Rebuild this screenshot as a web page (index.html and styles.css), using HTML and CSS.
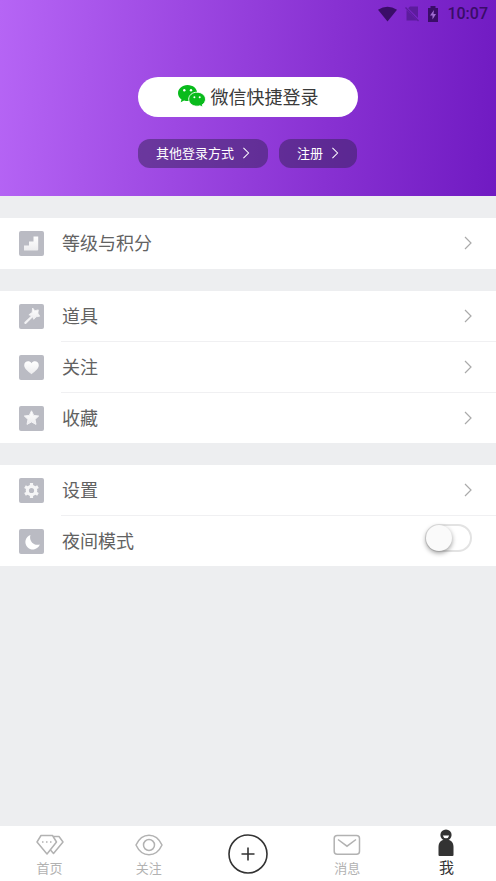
FILE: index.html
```html
<!DOCTYPE html>
<html lang="zh-CN">
<head>
<meta charset="utf-8">
<meta name="viewport" content="width=device-width, initial-scale=1">
<title>我</title>
<link rel="stylesheet" href="styles.css">
</head>
<body>
<svg class="defs" aria-hidden="true">
  <symbol id="chevron" viewBox="0 0 8 14"><path d="M1 1l6 6-6 6" fill="none" stroke="currentColor" stroke-width="1.2"/></symbol>
  <linearGradient id="shade" x1="0" y1="0" x2="0" y2="1"><stop offset="0" stop-color="#fff"/><stop offset="1" stop-color="#ececee"/></linearGradient>
</svg>
<header class="hero">
  <div class="status">
    <svg width="19" height="16" viewBox="0 0 20 16"><path d="M0 3.500Q10-3 20 3.500L10 16z" fill="#3a0d68"/></svg>
    <svg width="14" height="16" viewBox="0 0 14 16"><path d="M5 .5h8v11.500L3.200 2.300zM1.500 4L12 14.500H1.500z" fill="#5c1c9d"/><path d="M.5 1.500l13 13.500" stroke="#5c1c9d" stroke-width="1.300"/></svg>
    <svg width="12" height="16" viewBox="0 0 12 16"><path d="M1 2h2.500V0h5v2H11v14H1z" fill="#3a0d68"/><path d="M7 4L3 9.500h2.500V13.500L9 8H6.500z" fill="#a06bd2"/></svg>
    <span class="clock">10:07</span>
  </div>
  <div class="login">
    <button class="wechat" type="button">
      <svg width="28" height="22" viewBox="0 0 28 22">
        <path d="M9.500 0C4.200 0 0 3.700 0 8.200c0 2.600 1.400 4.800 3.500 6.300L2.700 17.200l3.400-1.700c1.200.4 2.300.5 3.800.5C15 16 19.200 12.500 19.200 8 19.200 3.600 15 0 9.500 0z" fill="#09bb1c"/>
        <path d="M19 7.200c-4.700 0-8.300 3.100-8.300 7s3.600 7 8.300 7c1.100 0 2.100-.1 3-.4l2.900 1.500-.7-2.500c1.900-1.300 3.300-3.300 3.300-5.600 0-3.900-3.800-7-8.500-7z" fill="#09bb1c" stroke="#fff" stroke-width=".9"/>
        <g fill="#fff"><circle cx="6.300" cy="5.300" r="1.200"/><circle cx="13" cy="5.300" r="1.200"/><circle cx="16.400" cy="12.200" r="1"/><circle cx="21.700" cy="12.200" r="1"/></g>
      </svg>
      <span>微信快捷登录</span>
    </button>
    <div class="alternatives">
      <button class="pill" type="button">其他登录方式<svg class="pill-arrow"><use href="#chevron"/></svg></button>
      <button class="pill" type="button">注册<svg class="pill-arrow"><use href="#chevron"/></svg></button>
    </div>
  </div>
</header>

<main class="menu">
  <section class="group">
    <a class="row" href="#level">
      <svg class="icon" viewBox="0 0 25 25"><rect width="25" height="25" rx="2" fill="#babbc3"/><path d="M5 19.500v-5h5v-4h4.500v-5h4.700v13a1 1 0 0 1-1 1z" fill="url(#shade)"/></svg>
      <span class="label">等级与积分</span><svg class="arrow"><use href="#chevron"/></svg>
    </a>
  </section>
  <section class="group">
    <a class="row" href="#props">
      <svg class="icon" viewBox="0 0 25 25"><rect width="25" height="25" rx="2" fill="#babbc3"/><path d="M13.600 4l2.200 2.700 3.500-.8-.4 3.300 1.800 3-3.500.6-2.500 2.500-1.300-3.300-3.500-1.200 3.300-2.400z" fill="url(#shade)" stroke="#f5f5f6" stroke-width=".8" stroke-linejoin="round"/><path d="M12.700 12.700l-6.300 6.200" stroke="#f2f2f4" stroke-width="2.200" stroke-linecap="round"/></svg>
      <span class="label">道具</span><svg class="arrow"><use href="#chevron"/></svg>
    </a>
    <a class="row" href="#following">
      <svg class="icon" viewBox="0 0 25 25"><rect width="25" height="25" rx="2" fill="#babbc3"/><path d="M12.500 19.300C8.500 16 5.200 13.600 5.200 10.300c0-4.300 5.300-5.400 7.300-2 2-3.400 7.300-2.300 7.300 2 0 3.300-3.300 5.700-7.300 9z" fill="url(#shade)"/></svg>
      <span class="label">关注</span><svg class="arrow"><use href="#chevron"/></svg>
    </a>
    <a class="row" href="#favorites">
      <svg class="icon" viewBox="0 0 25 25"><rect width="25" height="25" rx="2" fill="#babbc3"/><path d="M12.500 4.800l2.200 4.600 5 .6-3.700 3.400 1 5-4.500-2.500L8 18.400l1-5L5.300 10l5-.6z" fill="url(#shade)" stroke="#f3f3f5" stroke-linejoin="round"/></svg>
      <span class="label">收藏</span><svg class="arrow"><use href="#chevron"/></svg>
    </a>
  </section>
  <section class="group">
    <a class="row" href="#settings">
      <svg class="icon" viewBox="0 0 25 25"><rect width="25" height="25" rx="2" fill="#babbc3"/><circle cx="12.500" cy="12.500" r="4.200" fill="none" stroke="#f5f5f6" stroke-width="3.200"/><path d="M12.500 5v3M12.500 17v3M6 8.700l2.600 1.500M16.400 14.800l2.600 1.500M6 16.300l2.600-1.500M16.400 10.200L19 8.700" stroke="#f5f5f6" stroke-width="3.200"/></svg>
      <span class="label">设置</span><svg class="arrow"><use href="#chevron"/></svg>
    </a>
    <label class="row">
      <svg class="icon" viewBox="0 0 25 25"><rect width="25" height="25" rx="2" fill="#babbc3"/><path d="M11.500 6A7.400 7.400 0 1 0 20.800 15.400C15 17.500 9.500 12 11.500 6z" fill="#fff"/></svg>
      <span class="label">夜间模式</span>
      <input class="switch" type="checkbox" role="switch">
    </label>
  </section>
</main>

<nav class="tabs">
  <a class="tab" href="#home">
    <svg width="28" height="22" viewBox="0 0 28 22" fill="none" stroke="#b2b2b2" stroke-width="1.500" stroke-linejoin="round"><path d="M5 1.500h11.500l4 6.500L11 20 1 8z"/><path d="M17.500 2.500H23L27 8 17.500 19.500l-3-3.500"/><path d="M6 8h1.500M10 8h1.500M14 8h1.500" stroke-width="1.600"/></svg>
    <span>首页</span>
  </a>
  <a class="tab" href="#follow">
    <svg width="28" height="22" viewBox="0 0 28 22" fill="none" stroke="#b2b2b2" stroke-width="1.500"><path d="M1 11C7-2 21-2 27 11 21 24 7 24 1 11z" stroke-linejoin="round"/><circle cx="14" cy="11" r="5.500"/></svg>
    <span>关注</span>
  </a>
  <button class="tab" type="button" aria-label="发布">
    <svg width="40" height="40" viewBox="0 0 40 40" fill="none" stroke="#333" stroke-width="1.600"><circle cx="20" cy="20" r="19"/><path d="M20 13.500v13M13.500 20h13"/></svg>
  </button>
  <a class="tab" href="#messages">
    <svg width="28" height="22" viewBox="0 0 28 22" fill="none" stroke="#b2b2b2" stroke-width="1.500"><rect x="1.200" y="1.500" width="25.300" height="18.700" rx="3"/><path d="M5 5.500l9 6.700 9-6.700"/></svg>
    <span>消息</span>
  </a>
  <a class="tab current" href="#me" aria-current="page">
    <svg width="16" height="28" viewBox="0 0 16 28"><circle cx="8" cy="6" r="5.600" fill="#333"/><path d="M.5 26v-8C.5 13.500 3 11.500 5 11h6c2 .5 4.500 2.500 4.500 7v8q0 1-1 1h-13q-1 0-1-1z" fill="#333"/><path d="M4.800 6.500h6.400Q10.500 9.300 8 9.300T4.800 6.500z" fill="#fff"/></svg>
    <span>我</span>
  </a>
</nav>
</body>
</html>
```
FILE: styles.css
```css
* {
  box-sizing: border-box;
}

body {
  margin: 0;
  min-height: 100vh;
  display: flex;
  flex-direction: column;
  background: #edeef0;
  color: #626262;
  font-family: "Noto Sans CJK SC", sans-serif;
}

button {
  border: 0;
  padding: 0;
  background: none;
  font: inherit;
  cursor: pointer;
}

a {
  color: inherit;
  text-decoration: none;
}

svg {
  display: block;
  flex: none;
}

.defs {
  position: absolute;
  width: 0;
  height: 0;
}

.hero {
  padding-bottom: 28px;
  background: linear-gradient(94deg, #b665f5 0%, #9d48e2 36%, #8831d2 66%, #701ac2 100%);
}

.status {
  display: flex;
  justify-content: flex-end;
  align-items: center;
  gap: 8px;
  height: 27px;
  padding-right: 8px;
}

.clock {
  color: #3a0d68;
  font: 500 16px/20px Roboto, sans-serif;
}

.login {
  width: 220px;
  margin: 50px auto 0;
}

.wechat {
  display: flex;
  justify-content: center;
  align-items: center;
  gap: 5px;
  width: 100%;
  height: 40px;
  padding-bottom: 2px;
  border-radius: 20px;
  background: #fff;
  color: #3a3a3a;
  font-size: 18px;
}

.alternatives {
  display: flex;
  gap: 11px;
  margin-top: 22px;
}

.pill {
  display: flex;
  align-items: center;
  gap: 8px;
  height: 29px;
  padding: 0 18px 2px;
  border-radius: 12px;
  background: rgba(51, 34, 85, 0.5);
  color: #fff;
  font-size: 13px;
  white-space: nowrap;
}

.pill-arrow {
  width: 8px;
  height: 12px;
}

.menu {
  flex: 1;
  display: flex;
  flex-direction: column;
  gap: 22px;
  padding: 22px 0;
}

.group {
  min-height: 51px;
  background: #fff;
}

.row {
  display: grid;
  grid-template-columns: 25px 1fr auto;
  column-gap: 18px;
  align-items: center;
  height: 50px;
  padding: 0 24px 0 19px;
  font-size: 18px;
}

.row + .row {
  height: 51px;
  border-top: 1px solid #f0f0f2;
  border-image: linear-gradient(to right, transparent 62px, #f0f0f2 62px) 1;
}

.icon {
  width: 25px;
  height: 25px;
}

.label {
  padding-bottom: 2px;
}

.arrow {
  width: 8px;
  height: 14px;
  color: #aaa;
}

.switch {
  appearance: none;
  display: flex;
  align-items: center;
  align-self: start;
  width: 47px;
  height: 28px;
  margin: 8px 0 0;
  border: 2px solid #e3e3e3;
  border-radius: 14px;
  background: #fff;
}

.switch::before {
  content: "";
  width: 26px;
  height: 26px;
  margin-left: -1px;
  border-radius: 50%;
  background: #fafafa;
  box-shadow: 0 2px 5px rgba(0, 0, 0, 0.4);
}

.switch:checked {
  background: #9d48e2;
}

.switch:checked::before {
  margin-left: 18px;
}

.tabs {
  display: grid;
  grid-template-columns: repeat(5, 1fr);
  height: 55px;
  background: #fff;
}

.tab {
  display: flex;
  flex-direction: column;
  align-items: center;
  justify-content: center;
  gap: 3px;
  padding-top: 3px;
  color: #b2b2b2;
  font-size: 13px;
  line-height: 18px;
}

button.tab {
  padding-top: 0;
}

.current {
  gap: 1px;
  padding: 0 0 3px;
  color: #333;
  font-size: 15px;
}
```
